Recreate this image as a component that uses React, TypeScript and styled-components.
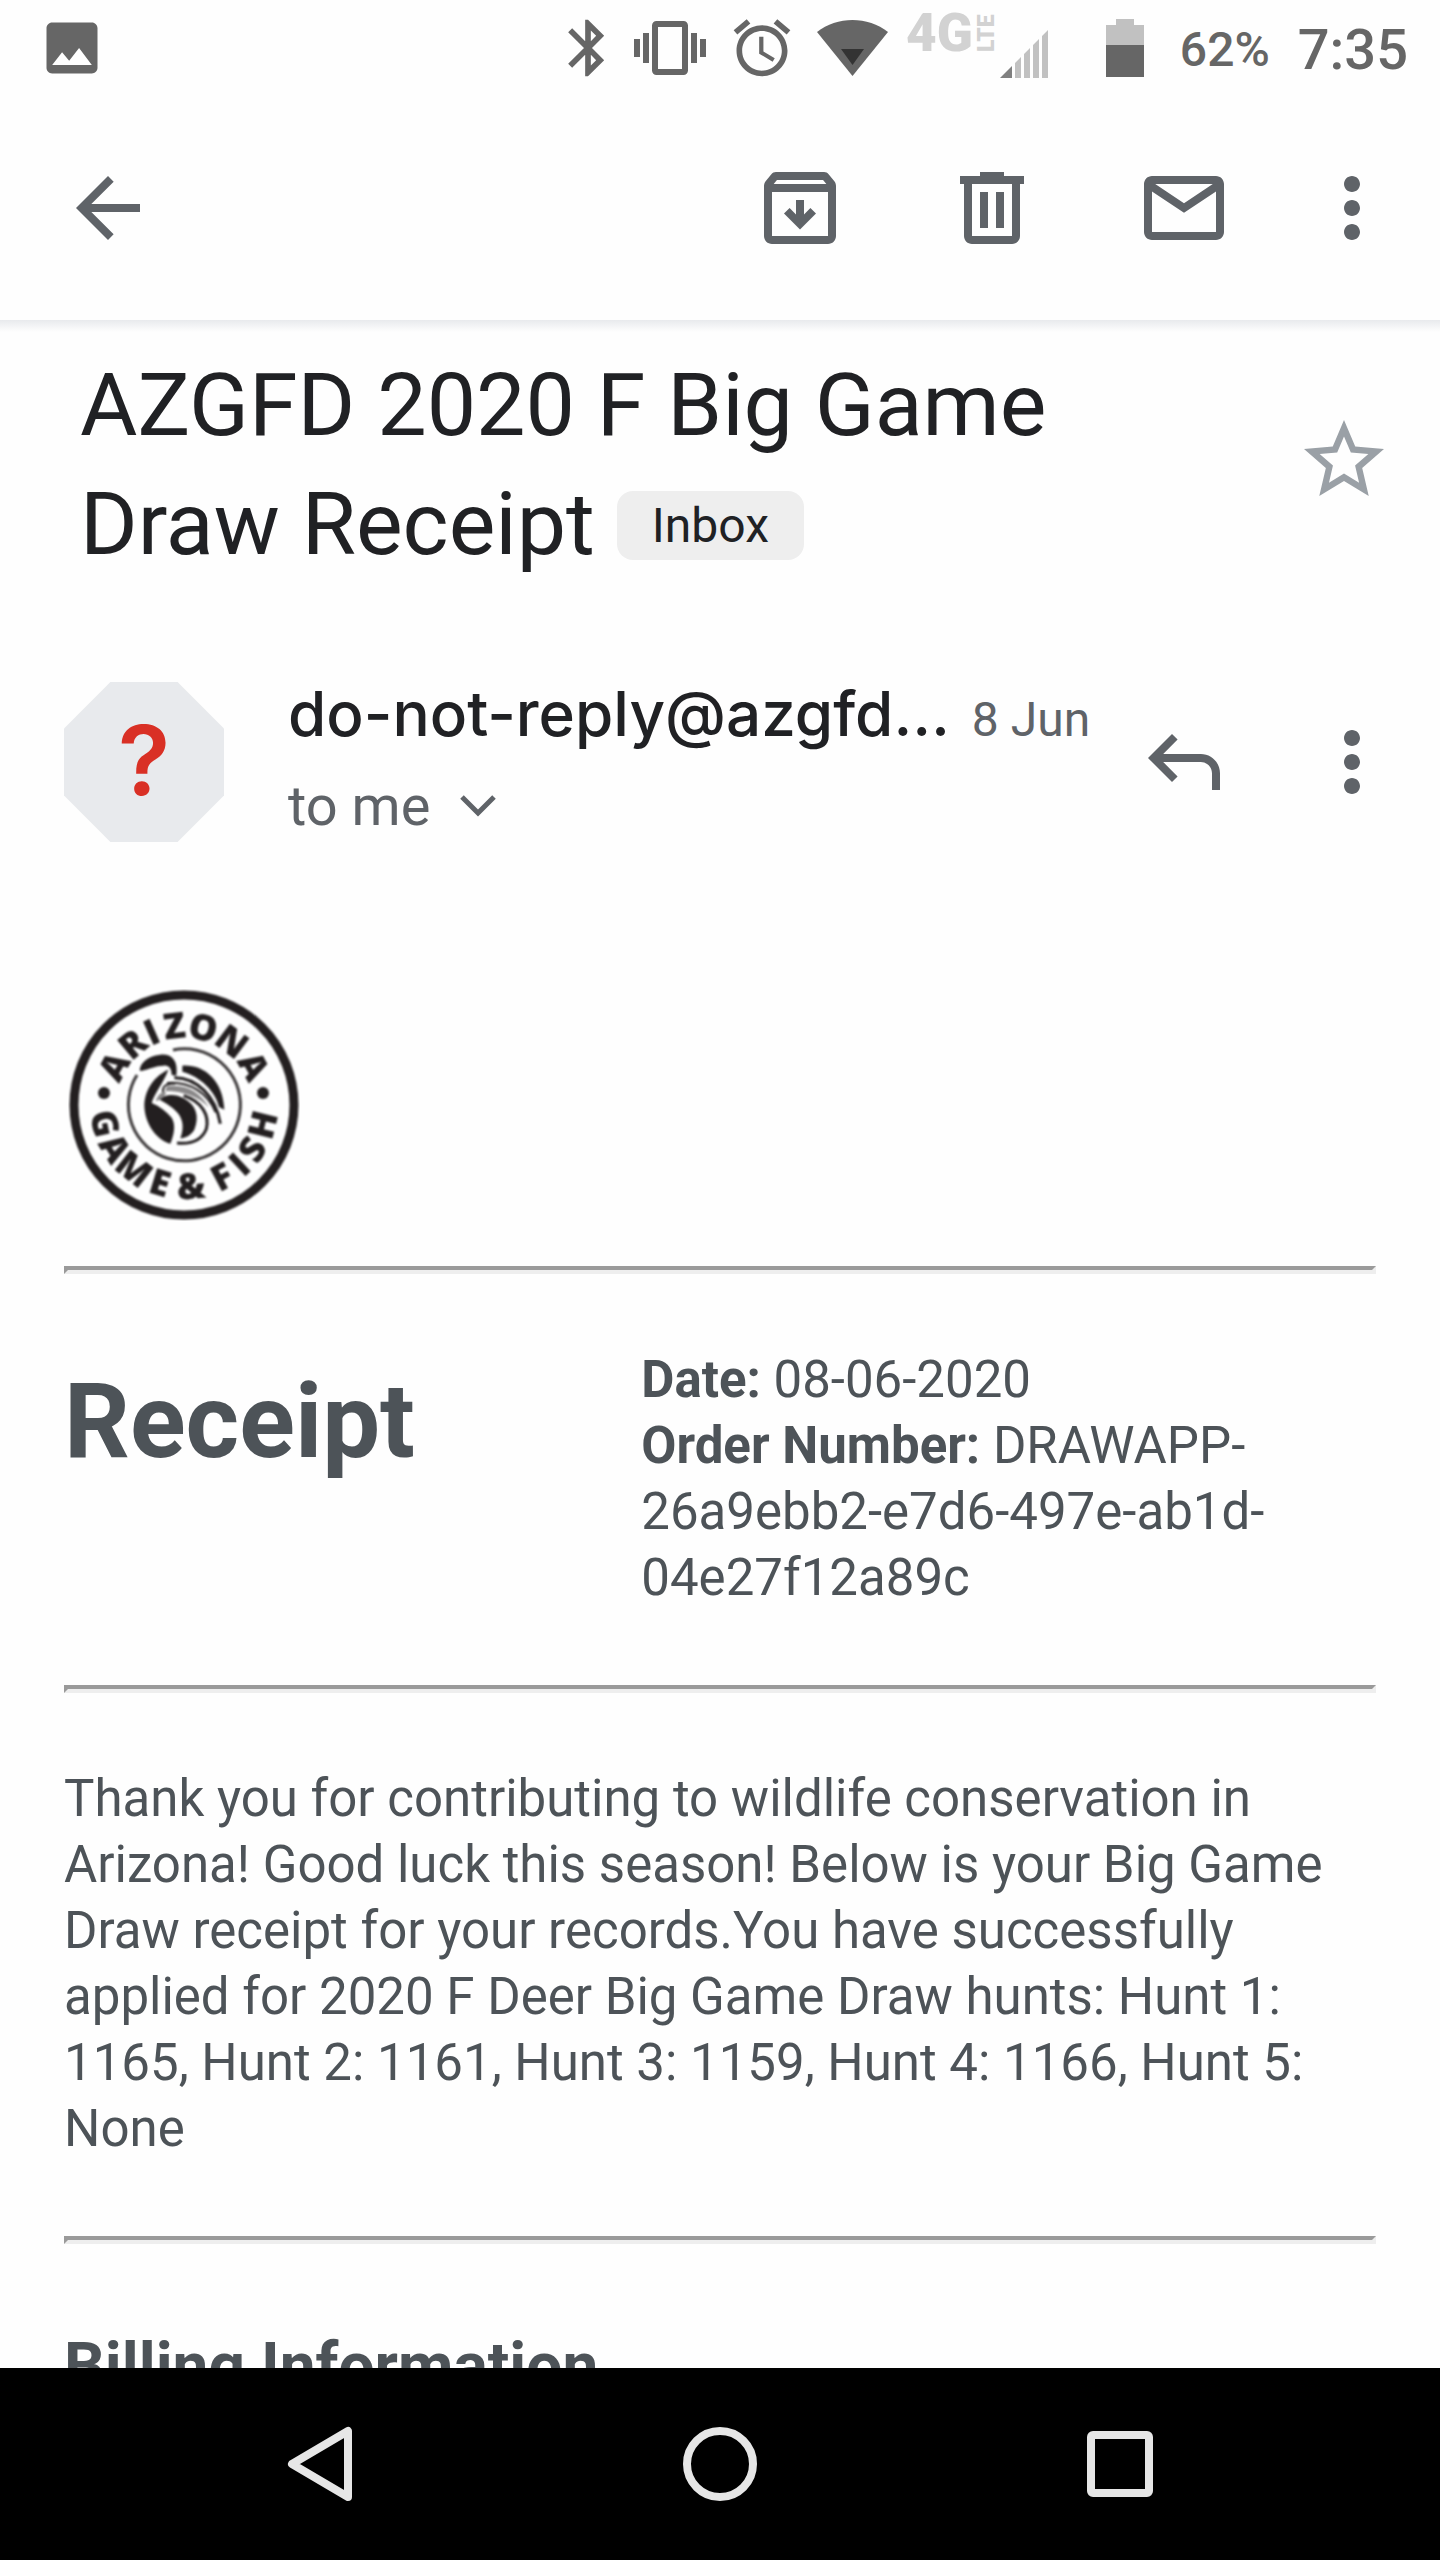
import React from "react";
import styled, { createGlobalStyle } from "styled-components";

const GlobalStyle = createGlobalStyle`
  *, *::before, *::after { box-sizing: border-box; }
  body {
    margin: 0;
    background: #fefefe;
    font-family: Roboto, "Liberation Sans", sans-serif;
    color: #202124;
  }
  h1, h2, h3, p { margin: 0; }
  button {
    margin: 0;
    padding: 0;
    border: 0;
    background: none;
    font: inherit;
    color: inherit;
    cursor: pointer;
  }
  svg { display: block; flex: none; }
`;

const Screen = styled.div`
  display: flex;
  flex-direction: column;
  height: 100vh;
  background: #fefefe;
`;

const StatusBar = styled.header`
  flex: none;
  display: flex;
  align-items: flex-start;
  height: 96px;
  padding: 0 32px 0 38px;
  color: #666666;
`;

const StatusItem = styled.span<{ $gap?: number; $top: number }>`
  margin-left: ${(p) => p.$gap ?? 0}px;
  margin-top: ${(p) => p.$top}px;
`;

const StatusSpacer = styled.span`
  flex: 1;
`;

const StatusText = styled.span<{ $size: number; $gap: number }>`
  margin-left: ${(p) => p.$gap}px;
  font-size: ${(p) => p.$size}px;
  line-height: 100px;
  font-weight: 500;
`;

const Toolbar = styled.nav`
  flex: none;
  display: flex;
  align-items: center;
  height: 224px;
  padding: 0 16px 0 12px;
  color: #5f6368;
`;

const ToolbarSpacer = styled.div`
  flex: 1;
`;

const IconButton = styled.button<{ $width?: number; $color?: string }>`
  flex: none;
  display: flex;
  align-items: center;
  justify-content: center;
  width: ${(p) => p.$width ?? 192}px;
  height: 144px;
  color: ${(p) => p.$color ?? "#5f6368"};
`;

const Message = styled.main`
  flex: 1;
  min-height: 0;
  overflow: hidden;
  background: linear-gradient(#e8eaed, #fefefe 12px);
`;

const SubjectRow = styled.div`
  display: flex;
  align-items: flex-start;
  justify-content: space-between;
  padding: 25px 24px 0 80px;
`;

const Subject = styled.h1`
  max-width: 1040px;
  font-size: 88px;
  line-height: 119px;
  font-weight: 400;
`;

const Chip = styled.span`
  display: inline-block;
  vertical-align: 12px;
  padding: 0 35px;
  border-radius: 16px;
  background: #eeeeee;
  font-size: 48px;
  line-height: 69px;
`;

const StarSlot = styled.div`
  padding-top: 43px;
`;

const SenderRow = styled.section`
  display: flex;
  align-items: center;
  padding: 99px 16px 0 64px;
`;

const Avatar = styled.div`
  flex: none;
  display: flex;
  align-items: center;
  justify-content: center;
  width: 160px;
  height: 160px;
  padding-bottom: 4px;
  background: #e8eaed;
  clip-path: polygon(29% 0, 71% 0, 100% 29%, 100% 71%, 71% 100%, 29% 100%, 0 71%, 0 29%);
  color: #d93025;
  font-family: Inter, Roboto, sans-serif;
  font-size: 96px;
  line-height: 156px;
  font-weight: 600;
`;

const SenderText = styled.div`
  flex: 1;
  min-width: 0;
  display: flex;
  flex-direction: column;
  align-items: flex-start;
  gap: 28px;
  padding: 0 0 4px 64px;
`;

const NameLine = styled.div`
  display: flex;
  align-items: baseline;
  gap: 22px;
  height: 64px;
  line-height: 64px;
  white-space: nowrap;
`;

const SenderName = styled.h2`
  font-family: Inter, Roboto, sans-serif;
  font-size: 62px;
  line-height: 64px;
  font-weight: 500;
`;

const SentDate = styled.time`
  font-size: 48px;
  color: #5f6368;
`;

const Recipient = styled.button`
  display: flex;
  align-items: center;
  gap: 30px;
  font-size: 56px;
  line-height: 64px;
  color: #5f6368;
`;

const Body = styled.article`
  padding: 147px 64px 0;
  color: #4d5358;
  font-size: 51px;
  line-height: 66px;
`;

const LogoFrame = styled.div`
  padding: 0 4px 45px;
`;

const Rule = styled.hr`
  height: 8px;
  margin: 0;
  border: 4px solid;
  border-color: #9a9a9a #eeeeee #eeeeee #9a9a9a;
`;

const ReceiptGrid = styled.section`
  display: grid;
  grid-template-columns: 44fr 56fr;
  padding: 73px 0 74px;
`;

const ReceiptTitle = styled.h2`
  padding-top: 15px;
  font-size: 103px;
  line-height: 120px;
  font-weight: 700;
`;

const Thanks = styled.p`
  padding: 73px 0 74px;
`;

const BillingTitle = styled.h3`
  padding-top: 85px;
  font-size: 64px;
  line-height: 76px;
  font-weight: 700;
`;

const SystemNav = styled.footer`
  flex: none;
  display: flex;
  height: 192px;
  padding: 0 120px;
  background: #000000;
`;

const NavButton = styled.button`
  flex: 1;
  display: flex;
  align-items: center;
  justify-content: center;
`;

function MaterialIcon({ d, size = 96 }: { d: string; size?: number }) {
  return (
    <svg width={size} height={size} viewBox="0 0 24 24" fill="currentColor" aria-hidden="true">
      <path fillRule="evenodd" d={d} />
    </svg>
  );
}

const icons = {
  photo:
    "M21 19V5c0-1.1-.9-2-2-2H5c-1.1 0-2 .9-2 2v14c0 1.1.9 2 2 2h14c1.1 0 2-.9 2-2zM8.5 13.5l2.5 3.01L14.5 12l4.5 6H5l3.5-4.5z",
  bluetooth:
    "M17.71 7.71L12 2h-1v7.59L6.41 5 5 6.41 10.59 12 5 17.59 6.41 19 11 14.41V22h1l5.71-5.71-4.3-4.29 4.3-4.29zM13 5.83l1.88 1.88L13 9.59V5.83zm1.88 10.46L13 18.17v-3.76l1.88 1.88z",
  vibrate:
    "M0 15h2V9H0v6zm3 2h2V7H3v10zm19-8v6h2V9h-2zm-3 8h2V7h-2v10zM16.5 3h-9C6.67 3 6 3.67 6 4.5v15c0 .83.67 1.5 1.5 1.5h9c.83 0 1.5-.67 1.5-1.5v-15c0-.83-.67-1.5-1.5-1.5zM16 19H8V5h8v14z",
  alarm:
    "M22 5.72l-4.6-3.86-1.29 1.53 4.6 3.86L22 5.72zM7.88 3.39L6.6 1.86 2 5.71l1.29 1.53 4.59-3.85zM12.5 8H11v6l4.75 2.85.75-1.23-4-2.37V8zM12 4c-4.97 0-9 4.03-9 9s4.02 9 9 9c4.97 0 9-4.03 9-9s-4.03-9-9-9zm0 16c-3.87 0-7-3.13-7-7s3.13-7 7-7 7 3.13 7 7-3.13 7-7 7z",
  back: "M20 11H7.83l5.59-5.59L12 4l-8 8 8 8 1.41-1.41L7.83 13H20v-2z",
  archive:
    "M20.54 5.23l-1.39-1.68C18.88 3.21 18.47 3 18 3H6c-.47 0-.88.21-1.16.55L3.46 5.23C3.17 5.57 3 6.02 3 6.5V19c0 1.1.9 2 2 2h14c1.1 0 2-.9 2-2V6.5c0-.48-.17-.93-.46-1.27zM6.24 5h11.52l.83 1H5.42l.82-1zM5 19V8h14v11H5zM13 10h-2v3.6l-1.6-1.6L8 13.4l4 4 4-4-1.4-1.4-1.6 1.6V10z",
  trash:
    "M15 4V3H9v1H4v2h1v13c0 1.1.9 2 2 2h10c1.1 0 2-.9 2-2V6h1V4h-5zm2 15H7V6h10v13zM9 8h2v9H9V8zm4 0h2v9h-2V8z",
  mail:
    "M20 4H4c-1.1 0-2 .9-2 2v12c0 1.1.9 2 2 2h16c1.1 0 2-.9 2-2V6c0-1.1-.9-2-2-2zM4 18V7.9l8 5.3 8-5.3V18H4zM12 10.8L4.8 6h14.4L12 10.8z",
  more:
    "M12 8c1.1 0 2-.9 2-2s-.9-2-2-2-2 .9-2 2 .9 2 2 2zm0 2c-1.1 0-2 .9-2 2s.9 2 2 2 2-.9 2-2-.9-2-2-2zm0 6c-1.1 0-2 .9-2 2s.9 2 2 2 2-.9 2-2-.9-2-2-2z",
  star:
    "M22 9.24l-7.19-.62L12 2 9.19 8.63 2 9.24l5.46 4.73L5.82 21 12 17.27 18.18 21l-1.63-7.03L22 9.24zM12 15.4l-3.76 2.27 1-4.28-3.32-2.88 4.38-.38L12 6.1l1.71 4.04 4.38.38-3.32 2.88 1 4.28L12 15.4z",
  reply:
    "M21 19h-2v-4.200c0-1.550-1.250-2.800-2.800-2.800H6.800l3.600 3.600L9 17l-6-6 6-6 1.400 1.400L6.800 10h9.400c2.650 0 4.800 2.150 4.800 4.800V19z",
};

const topLetters: [string, number][] = [
  ["A", -61], ["R", -40], ["I", -24], ["Z", -7], ["O", 14], ["N", 37], ["A", 61],
];
const bottomLetters: [string, number][] = [
  ["G", 77], ["A", 58], ["M", 38], ["E", 17], ["&", -5], ["F", -28], ["I", -43], ["S", -57], ["H", -76],
];

function SealLogo() {
  return (
    <svg width="232" height="232" viewBox="0 0 232 232" role="img" aria-label="Arizona Game & Fish">
      <g transform="translate(116 116)" fill="#231f20" style={{ filter: "blur(1px)" }}>
        <circle r="110" fill="none" stroke="#231f20" strokeWidth="9" />
        <path d="M-11 -55 A56 56 0 1 1 -47 -30" fill="none" stroke="#3c393a" strokeWidth="3" />
        <g fontFamily="Open Sans, sans-serif" fontWeight="800" fontSize="36" textAnchor="middle">
          {topLetters.map(([letter, angle], i) => (
            <text key={i} y="-67" transform={`rotate(${angle})`}>{letter}</text>
          ))}
          {bottomLetters.map(([letter, angle], i) => (
            <text key={i} y="94" transform={`rotate(${angle})`}>{letter}</text>
          ))}
        </g>
        <circle cx="-80" cy="-12" r="6" />
        <circle cx="79" cy="-12" r="6" />
        <g transform="scale(.3333) translate(-403 -408)">
          <path d="M270 304C272 282 292 262 332 257C368 254 386 276 380 320L366 318C366 300 358 288 342 290C318 290 300 300 274 306Z" />
          <path d="M356 302C318 318 284 360 284 412C286 470 325 515 362 524C372 500 380 468 366 446C350 428 330 412 306 402C314 372 340 345 356 302Z" />
          <path d="M330 392C345 374 378 374 402 388C440 408 450 442 434 482C420 504 405 506 392 508C402 480 402 456 386 434C370 415 352 404 330 392Z" />
          <path d="M398 290C462 286 520 332 524 422L508 414C498 368 452 322 398 308Z" />
          <g fill="none" stroke="#231f20" strokeWidth="9">
            <path d="M374 326C442 326 498 382 512 464" />
            <path d="M352 342C420 336 474 372 498 430" strokeWidth="6" />
            <path d="M402 380C458 398 480 440 470 480C456 514 422 526 382 522" />
            <path d="M340 370C338 350 352 342 376 344" strokeWidth="6" />
          </g>
          <path d="M352 352C410 344 452 370 478 416C450 384 400 366 346 366Z" fill="#8a8889" />
          <path d="M318 396C326 372 344 364 350 372C340 388 330 394 318 396Z" fill="#8a8889" />
        </g>
      </g>
    </svg>
  );
}

export default function App() {
  return (
    <>
      <GlobalStyle />
      <Screen>
        <StatusBar>
          <StatusItem $top={14}><MaterialIcon d={icons.photo} size={68} /></StatusItem>
          <StatusSpacer />
          <StatusItem $top={14}><MaterialIcon d={icons.bluetooth} size={68} /></StatusItem>
          <StatusItem $top={12} $gap={12}><MaterialIcon d={icons.vibrate} size={72} /></StatusItem>
          <StatusItem $top={14} $gap={22}><MaterialIcon d={icons.alarm} size={68} /></StatusItem>
          <StatusItem $top={20} $gap={21}>
            <svg width="71" height="56" viewBox="0 0 71 56" aria-hidden="true">
              <path d="M0 12C20 -4 51 -4 71 12L35.500 56Z" fill="#666666" />
              <path d="M24 29H47L35.500 45Z" fill="#333333" />
            </svg>
          </StatusItem>
          <StatusItem $top={0} $gap={18}>
            <svg width="94" height="66" viewBox="-2 0 94 66" fill="#d2d2d2" fontFamily="Roboto, sans-serif" aria-hidden="true">
              <text x="-2" y="51" fontSize="53" fontWeight="900">4G</text>
              <text transform="translate(86 52) rotate(-90)" fontSize="23" fontWeight="900">LTE</text>
            </svg>
          </StatusItem>
          <StatusItem $top={30}>
            <svg width="48" height="48" viewBox="0 0 48 48" fill="#c1c1c1" aria-hidden="true">
              <path d="M0 48L12 36V48Z" fill="#808080" />
              <path d="M15 48V33L21 27V48ZM24 48V24L30 18V48ZM33 48V15L39 9V48ZM42 48V6L48 0V48Z" />
            </svg>
          </StatusItem>
          <StatusItem $top={19} $gap={58}>
            <svg width="38" height="58" viewBox="0 0 38 58" aria-hidden="true">
              <path d="M10 0H28V6H38V26H0V6H10Z" fill="#c1c1c1" />
              <path d="M0 26H38V58H0Z" fill="#666666" />
            </svg>
          </StatusItem>
          <StatusText $size={48} $gap={36}>62%</StatusText>
          <StatusText $size={56} $gap={28}>7:35</StatusText>
        </StatusBar>

        <Toolbar>
          <IconButton aria-label="Back"><MaterialIcon d={icons.back} /></IconButton>
          <ToolbarSpacer />
          <IconButton aria-label="Archive"><MaterialIcon d={icons.archive} /></IconButton>
          <IconButton aria-label="Delete"><MaterialIcon d={icons.trash} /></IconButton>
          <IconButton aria-label="Mark as unread"><MaterialIcon d={icons.mail} /></IconButton>
          <IconButton $width={144} aria-label="More options"><MaterialIcon d={icons.more} /></IconButton>
        </Toolbar>

        <Message>
          <SubjectRow>
            <Subject>
              AZGFD 2020 F Big Game Draw Receipt <Chip>Inbox</Chip>
            </Subject>
            <StarSlot>
              <IconButton $width={144} $color="#9aa0a6" aria-label="Star"><MaterialIcon d={icons.star} /></IconButton>
            </StarSlot>
          </SubjectRow>

          <SenderRow>
            <Avatar aria-hidden="true">?</Avatar>
            <SenderText>
              <NameLine>
                <SenderName>do-not-reply@azgfd…</SenderName>
                <SentDate dateTime="2020-06-08">8 Jun</SentDate>
              </NameLine>
              <Recipient>
                to me
                <svg width="36" height="22" viewBox="0 0 36 22" fill="none" stroke="currentColor" strokeWidth="5" aria-hidden="true">
                  <path d="M2 2L18 18L34 2" />
                </svg>
              </Recipient>
            </SenderText>
            <IconButton aria-label="Reply"><MaterialIcon d={icons.reply} /></IconButton>
            <IconButton $width={144} aria-label="More"><MaterialIcon d={icons.more} /></IconButton>
          </SenderRow>

          <Body>
            <LogoFrame><SealLogo /></LogoFrame>
            <Rule />
            <ReceiptGrid>
              <ReceiptTitle>Receipt</ReceiptTitle>
              <div>
                <p><b>Date:</b> 08-06-2020</p>
                <p><b>Order Number:</b> DRAWAPP-26a9ebb2-e7d6-497e-ab1d-04e27f12a89c</p>
              </div>
            </ReceiptGrid>
            <Rule />
            <Thanks>
              Thank you for contributing to wildlife conservation in Arizona! Good luck this season! Below is your
              Big Game Draw receipt for your records.You have successfully applied for 2020 F Deer Big Game Draw
              hunts: Hunt 1: 1165, Hunt 2: 1161, Hunt 3: 1159, Hunt 4: 1166, Hunt 5: None
            </Thanks>
            <Rule />
            <BillingTitle>Billing Information</BillingTitle>
          </Body>
        </Message>

        <SystemNav>
          <NavButton aria-label="Back">
            <svg width="66" height="76" viewBox="0 0 66 76" fill="none" stroke="#e6e6e6" strokeWidth="8" strokeLinejoin="round" aria-hidden="true">
              <path d="M61 5V71L5 38Z" />
            </svg>
          </NavButton>
          <NavButton aria-label="Home">
            <svg width="74" height="74" viewBox="0 0 74 74" fill="none" stroke="#e6e6e6" strokeWidth="8" aria-hidden="true">
              <circle cx="37" cy="37" r="33" />
            </svg>
          </NavButton>
          <NavButton aria-label="Recent apps">
            <svg width="66" height="66" viewBox="0 0 66 66" fill="none" stroke="#e6e6e6" strokeWidth="8" aria-hidden="true">
              <rect x="4" y="4" width="58" height="58" rx="2" />
            </svg>
          </NavButton>
        </SystemNav>
      </Screen>
    </>
  );
}
